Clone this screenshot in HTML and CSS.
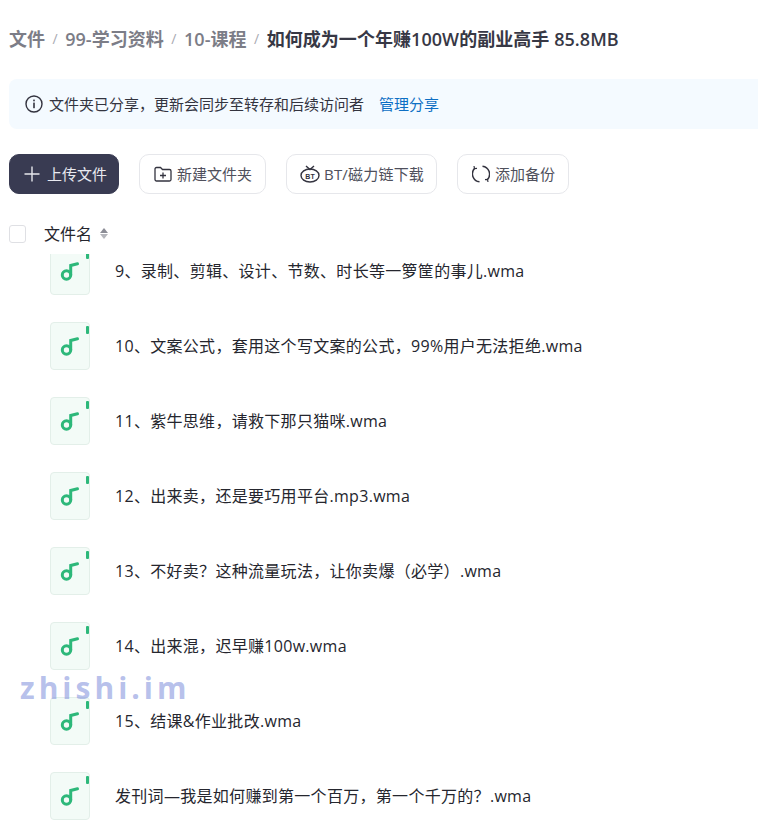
FILE: index.html
```html
<!DOCTYPE html>
<html lang="zh-CN">
<head>
<meta charset="utf-8">
<title>文件</title>
<link rel="stylesheet" href="styles.css">
</head>
<body>
<main class="page">
  <nav class="crumbs">
    <a class="crumb">文件</a><span class="sep">/</span>
    <a class="crumb">99-学习资料</a><span class="sep">/</span>
    <a class="crumb">10-课程</a><span class="sep">/</span>
    <span class="crumb current">如何成为一个年赚100W的副业高手 85.8MB</span>
  </nav>

  <div class="notice">
    <svg viewBox="0 0 18 18" width="18" height="18"><circle cx="9" cy="9" r="8" fill="none" stroke="#33333f" stroke-width="1.4"/><rect x="8.2" y="7.6" width="1.6" height="5.6" fill="#33333f"/><rect x="8.2" y="4.6" width="1.6" height="1.7" fill="#33333f"/></svg>
    <span class="lift">文件夹已分享，更新会同步至转存和后续访问者</span>
    <a class="notice-link lift">管理分享</a>
  </div>

  <div class="toolbar">
    <button class="btn primary">
      <svg viewBox="0 0 16 16" width="16" height="16"><path d="M8 0.5v15M0.5 8h15" stroke="#e6e7ec" stroke-width="1.4" fill="none"/></svg>
      <span class="lift">上传文件</span>
    </button>
    <button class="btn">
      <svg viewBox="0 0 18 16" width="18" height="16"><path d="M1 3a1.5 1.5 0 0 1 1.5-1.5h4L8.500 3.500h7a1.500 1.500 0 0 1 1.500 1.500v8.500a1.500 1.500 0 0 1-1.500 1.500h-13A1.500 1.500 0 0 1 1 13.500z" fill="none" stroke="#33333f" stroke-width="1.300"/><path d="M9 6.500v6M6 9.500h6" stroke="#33333f" stroke-width="1.300"/></svg>
      <span class="lift">新建文件夹</span>
    </button>
    <button class="btn btn-bt">
      <svg viewBox="0 0 20 18" width="20" height="18"><ellipse cx="10" cy="10.500" rx="9" ry="6.500" fill="none" stroke="#33333f" stroke-width="1.400"/><path d="M6 1l4 3.500L14 1" fill="none" stroke="#33333f" stroke-width="1.400"/><text x="10" y="13.500" class="bt-mark">BT</text></svg>
      <span class="lift">BT/磁力链下载</span>
    </button>
    <button class="btn">
      <svg viewBox="0 0 18 18" width="18" height="18"><path d="M10.500 1.200A8 8 0 0 1 15.500 14.500" fill="none" stroke="#33333f" stroke-width="1.500"/><path d="M7.500 16.800A8 8 0 0 1 2.500 3.500" fill="none" stroke="#33333f" stroke-width="1.500"/><path d="M2 1l.5 2.500 2.500-.2M16 17l-.5-2.500-2.500.2" fill="none" stroke="#33333f" stroke-width="1.200"/></svg>
      <span class="lift">添加备份</span>
    </button>
  </div>

  <div class="table-head">
    <span class="checkbox"></span>
    <span class="col-name lift">文件名</span>
    <span class="sort lift"><i class="up"></i><i class="down"></i></span>
  </div>

  <div class="list">
    <div class="rows">
      <div class="row"><span class="file-icon"><svg viewBox="0 0 24 24" width="24" height="24"><path d="M19.500 4.800L12.700 6.500V16" fill="none" stroke="#2db87a" stroke-width="3" stroke-linecap="round"/><circle cx="8.500" cy="16" r="4.200" fill="none" stroke="#2db87a" stroke-width="3"/></svg></span><span>9、录制、剪辑、设计、节数、时长等一箩筐的事儿.wma</span></div>
      <div class="row"><span class="file-icon"><svg viewBox="0 0 24 24" width="24" height="24"><path d="M19.500 4.800L12.700 6.500V16" fill="none" stroke="#2db87a" stroke-width="3" stroke-linecap="round"/><circle cx="8.500" cy="16" r="4.200" fill="none" stroke="#2db87a" stroke-width="3"/></svg></span><span>10、文案公式，套用这个写文案的公式，99%用户无法拒绝.wma</span></div>
      <div class="row"><span class="file-icon"><svg viewBox="0 0 24 24" width="24" height="24"><path d="M19.500 4.800L12.700 6.500V16" fill="none" stroke="#2db87a" stroke-width="3" stroke-linecap="round"/><circle cx="8.500" cy="16" r="4.200" fill="none" stroke="#2db87a" stroke-width="3"/></svg></span><span>11、紫牛思维，请救下那只猫咪.wma</span></div>
      <div class="row"><span class="file-icon"><svg viewBox="0 0 24 24" width="24" height="24"><path d="M19.500 4.800L12.700 6.500V16" fill="none" stroke="#2db87a" stroke-width="3" stroke-linecap="round"/><circle cx="8.500" cy="16" r="4.200" fill="none" stroke="#2db87a" stroke-width="3"/></svg></span><span>12、出来卖，还是要巧用平台.mp3.wma</span></div>
      <div class="row"><span class="file-icon"><svg viewBox="0 0 24 24" width="24" height="24"><path d="M19.500 4.800L12.700 6.500V16" fill="none" stroke="#2db87a" stroke-width="3" stroke-linecap="round"/><circle cx="8.500" cy="16" r="4.200" fill="none" stroke="#2db87a" stroke-width="3"/></svg></span><span>13、不好卖？这种流量玩法，让你卖爆（必学）.wma</span></div>
      <div class="row"><span class="file-icon"><svg viewBox="0 0 24 24" width="24" height="24"><path d="M19.500 4.800L12.700 6.500V16" fill="none" stroke="#2db87a" stroke-width="3" stroke-linecap="round"/><circle cx="8.500" cy="16" r="4.200" fill="none" stroke="#2db87a" stroke-width="3"/></svg></span><span>14、出来混，迟早赚100w.wma</span></div>
      <div class="row"><span class="file-icon"><svg viewBox="0 0 24 24" width="24" height="24"><path d="M19.500 4.800L12.700 6.500V16" fill="none" stroke="#2db87a" stroke-width="3" stroke-linecap="round"/><circle cx="8.500" cy="16" r="4.200" fill="none" stroke="#2db87a" stroke-width="3"/></svg></span><span>15、结课&amp;作业批改.wma</span></div>
      <div class="row"><span class="file-icon"><svg viewBox="0 0 24 24" width="24" height="24"><path d="M19.500 4.800L12.700 6.500V16" fill="none" stroke="#2db87a" stroke-width="3" stroke-linecap="round"/><circle cx="8.500" cy="16" r="4.200" fill="none" stroke="#2db87a" stroke-width="3"/></svg></span><span>发刊词—我是如何赚到第一个百万，第一个千万的？.wma</span></div>
    </div>
  </div>
</main>
<div class="watermark">zhishi.im</div>
</body>
</html>
```
FILE: styles.css
```css
* { box-sizing: border-box; }
html, body { margin: 0; height: 100%; overflow: hidden; background: #fff; }
body {
  position: relative;
  font-family: "Open Sans", "Noto Sans CJK SC", sans-serif;
  color: #25262e;
}
svg { flex: none; }
.page {
  height: 828px;
  display: flex;
  flex-direction: column;
  padding-left: 9px;
}
.lift { margin-bottom: 2px; }
.crumbs {
  height: 24px;
  margin-top: 27px;
  display: flex;
  align-items: center;
  font-size: 18px;
  font-weight: 600;
  line-height: 24px;
  letter-spacing: 0.05px;
  white-space: nowrap;
}
.crumb { color: #7c7d87; }
.crumb.current { color: #373845; }
.sep { color: #a9aab2; font-weight: 400; font-size: 14px; margin: 0 7.450px; }
.notice {
  height: 50px;
  margin-top: 28px;
  margin-right: -10px;
  padding-left: 16px;
  display: flex;
  align-items: center;
  gap: 6px;
  font-size: 15px;
  color: #33343f;
  background: #f4faff;
  border-radius: 8px;
}
.notice-link { color: #0d6fc4; margin-left: 9px; }
.toolbar {
  margin-top: 25px;
  display: flex;
  gap: 20px;
}
.btn {
  height: 40px;
  padding: 0 13px 0 14px;
  display: flex;
  align-items: center;
  gap: 5px;
  font: inherit;
  font-size: 15px;
  white-space: nowrap;
  color: #4f505c;
  background: #fff;
  border: 1px solid #e6e7eb;
  border-radius: 10px;
}
.btn.primary {
  width: 110px;
  padding-right: 0;
  gap: 7px;
  color: #e9eaf0;
  background: #393b52;
  border-color: #393b52;
}
.btn-bt {
  width: 151px;
  padding: 0 0 0 13px;
  gap: 4px;
  letter-spacing: 0.2px;
}
.bt-mark { font-size: 7px; font-weight: 700; text-anchor: middle; fill: #33333f; font-family: "Liberation Sans", sans-serif; }
.table-head {
  height: 24px;
  margin-top: 28px;
  display: flex;
  align-items: center;
}
.checkbox {
  width: 17px;
  height: 18px;
  border: 1px solid #dfe0e4;
  border-radius: 3px;
  background: #fff;
}
.col-name { margin-left: 18px; font-size: 16px; color: #25262e; }
.sort { margin-left: 8px; display: flex; flex-direction: column; gap: 1px; }
.sort i { display: block; width: 0; height: 0; border-left: 4px solid transparent; border-right: 4px solid transparent; }
.sort .up { border-bottom: 5px solid #8c8d96; }
.sort .down { border-top: 5px solid #b5b6bc; }
.list {
  flex: 1;
  margin-top: 8px;
  overflow: hidden;
}
.rows { margin-top: -22px; display: flex; flex-direction: column; }
.row {
  height: 75px;
  flex: none;
  display: flex;
  align-items: center;
  padding-left: 41px;
  gap: 25px;
  font-size: 16px;
  letter-spacing: 0.3px;
  color: #25262e;
}
.file-icon {
  position: relative;
  width: 40px;
  height: 48px;
  margin-top: 2px;
  display: flex;
  align-items: center;
  justify-content: center;
  background: #f3fbf7;
  border: 1px solid #e3efe9;
  border-radius: 4px;
}
.file-icon::after {
  content: "";
  position: absolute;
  top: 3px;
  right: 0;
  width: 3px;
  height: 8px;
  background: #2db87a;
  border-radius: 1px;
}
.watermark {
  position: absolute;
  left: 20px;
  top: 668px;
  font-family: "Open Sans", sans-serif;
  font-size: 30px;
  font-weight: 700;
  letter-spacing: 4px;
  line-height: 40px;
  color: rgba(130, 146, 220, 0.58);
}
```
